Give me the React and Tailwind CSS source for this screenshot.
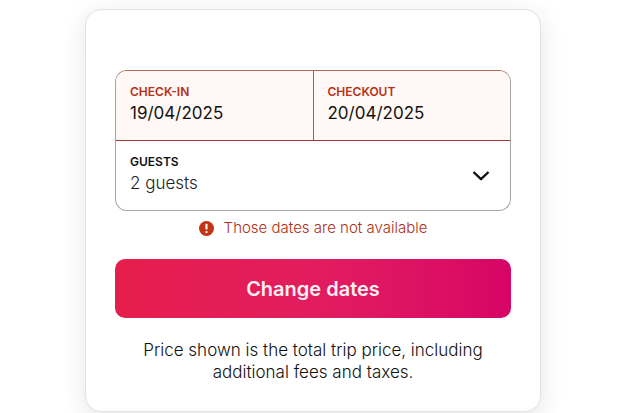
import React, { useState } from "react";

const DateField = ({ id, label, value, onChange }) => (
  <div className="min-w-0 flex-1 bg-[#fff8f6] px-3.5 pt-3 pb-[15px]">
    <label
      htmlFor={id}
      className="block text-xs leading-[18px] font-semibold text-[#b93015] uppercase"
    >
      {label}
    </label>
    <input
      id={id}
      type="text"
      value={value}
      onChange={(e) => onChange(e.target.value)}
      className="block h-6 w-full bg-transparent text-[17px] leading-6 text-[#111111] outline-none"
    />
  </div>
);

const App = () => {
  const [checkIn, setCheckIn] = useState("19/04/2025");
  const [checkOut, setCheckOut] = useState("20/04/2025");
  const [guests, setGuests] = useState("2");

  return (
    <main className="bg-white pt-[9px] pr-[79px] pb-px pl-[85px] font-['Inter','Noto_Sans',sans-serif]">
      <form
        onSubmit={(e) => e.preventDefault()}
        className="rounded-2xl border border-[#e2e2e2] bg-white px-[29px] pt-[60px] pb-7 shadow-[0_6px_24px_rgba(0,0,0,0.11)]"
      >
        {/* Trip details */}
        <div className="overflow-hidden rounded-xl border border-[#a5a5a5] border-t-[#b5695c]">
          <div className="flex divide-x divide-[#a8574b] border-b border-[#963a30]">
            <DateField id="check-in" label="Check-in" value={checkIn} onChange={setCheckIn} />
            <DateField id="checkout" label="Checkout" value={checkOut} onChange={setCheckOut} />
          </div>
          <div className="grid items-center">
            <div className="col-start-1 row-start-1 px-3.5 pt-3 pb-[15px]">
              <label
                htmlFor="guests"
                className="block text-xs leading-[18px] font-semibold text-[#111111] uppercase"
              >
                Guests
              </label>
              <select
                id="guests"
                value={guests}
                onChange={(e) => setGuests(e.target.value)}
                className="block h-6 w-full appearance-none bg-transparent text-[17px] leading-6 font-light text-[#222222] outline-none"
              >
                <option value="1">1 guest</option>
                <option value="2">2 guests</option>
                <option value="3">3 guests</option>
                <option value="4">4 guests</option>
              </select>
            </div>
            <svg
              viewBox="0 0 18 12"
              aria-hidden="true"
              className="pointer-events-none col-start-1 row-start-1 mr-5 h-3 w-[18px] justify-self-end"
            >
              <path
                d="M1.5 2 9 9.2 16.5 2"
                fill="none"
                stroke="#111111"
                strokeWidth="2.4"
                strokeLinejoin="round"
              />
            </svg>
          </div>
        </div>

        {/* Availability error */}
        <p
          role="alert"
          className="mt-[5px] flex items-center justify-center gap-2.5 text-[15px] leading-6 font-light text-[#b02e14]"
        >
          <svg viewBox="0 0 16 16" aria-hidden="true" className="size-[15px]">
            <circle cx="8" cy="8" r="8" fill="#c13515" />
            <path d="M6.9 3h2.2v6H6.9z" fill="#fff" />
            <circle cx="8" cy="11.8" r="1.2" fill="#fff" />
          </svg>
          Those dates are not available
        </p>

        <button
          type="submit"
          className="mt-[19px] block h-[59px] w-full rounded-[10px] bg-linear-to-r from-[#e61e4d] via-[#e31c5f] to-[#d70466] text-xl font-semibold text-[#fdeef3]"
        >
          Change dates
        </button>

        <p className="mt-[21px] text-center text-[17px] leading-[22px] font-light text-[#111111]">
          Price shown is the total trip price, including additional fees and taxes.
        </p>
      </form>
    </main>
  );
};

export default App;
